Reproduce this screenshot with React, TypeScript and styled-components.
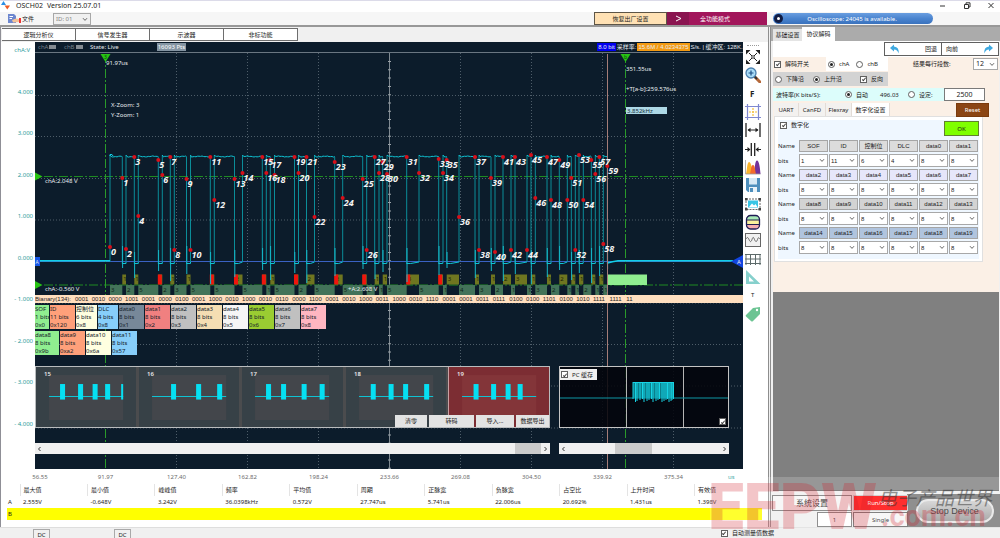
import React from "react";
import styled, { createGlobalStyle, css } from "styled-components";

const sans = `"Noto Sans", "Noto Sans CJK SC", sans-serif`;
const arial = `"Liberation Sans", "Noto Sans CJK SC", sans-serif`;

const GlobalStyle = createGlobalStyle`
  *, *::before, *::after { box-sizing: border-box; }
  body { margin: 0; background: #f0f0f0; color: #1c1c1c; font: 6px/8px ${sans}; }
  button, input, select { font: inherit; color: inherit; margin: 0; padding: 0; border-radius: 0; }
  svg { display: block; }
`;

/* ---------- Frame ---------- */
const Page = styled.div`
  position: relative;
  display: flex;
  flex-direction: column;
  min-height: 100vh;
  overflow: hidden;
`;
const TitleBar = styled.header`
  display: flex;
  align-items: center;
  height: 12px;
  padding: 0 5px 2px 1px;
  gap: 5px;
  background: #fff;
  border-top: 1px solid #dcdbe9;
`;
const Title = styled.h1`
  flex: 1;
  margin: 0;
  font-size: 7px;
  line-height: 8px;
  font-weight: 400;
`;
const Version = styled.span`
  margin-left: 4px;
`;
const WindowButtons = styled.div`
  display: flex;
  gap: 16px;
`;
const PlainButton = styled.button`
  display: grid;
  place-items: center;
  border: 0;
  background: none;
`;
const Toolbar = styled.div`
  display: grid;
  grid-template-columns: minmax(0, 1fr) 232px;
  height: 15px;
  background: #f6f6f6;
  border-bottom: 2px solid #989898;
`;
const ToolbarLeft = styled.div`
  display: flex;
  align-items: stretch;
`;
const FileButton = styled.button`
  display: flex;
  align-items: center;
  gap: 1px;
  width: 53px;
  padding-left: 8px;
  border: 0;
  background: none;
`;
const IdBox = styled.span`
  position: relative;
  width: 38px;
  height: 12px;
  margin-top: 1px;
  flex: none;
`;
const SelectField = styled.select<{ $pad?: number }>`
  appearance: none;
  display: block;
  width: 100%;
  height: 100%;
  padding-left: ${(p) => p.$pad ?? 2}px;
  border: 1px solid #a8a8a8;
  background: #fff;
`;
const IdSelect = styled(SelectField)`
  background: #f0f0f0;
  color: #858585;
`;
const Spacer = styled.div<{ $grow?: number }>`
  flex: ${(p) => p.$grow ?? 1};
`;
const ResetFactory = styled.button`
  width: 73px;
  border: 1px solid #5d5547;
  background: #ffe1b4;
`;
const ModeButton = styled.button`
  display: grid;
  grid-template-columns: 22px 1fr;
  align-items: center;
  width: 100px;
  padding-right: 26px;
  margin-right: 1px;
  border: 0;
  background: #a2165b;
  color: #fff;
`;
const ModeArrow = styled.span`
  display: grid;
  place-items: center;
  height: 13px;
  background: #8a1450;
`;
const StatusPill = styled.div`
  display: flex;
  align-items: center;
  width: 160px;
  height: 11px;
  margin: 1px 0 0 5px;
  padding-left: 1px;
  border-radius: 6px;
  background: linear-gradient(#6a9ee0, #4a84cf 50%, #3a72bd);
  color: #fff;
`;
const PillDot = styled.span`
  width: 9px;
  height: 9px;
  border: 3px solid #101c44;
  border-radius: 50%;
  background: #fff;
`;
const PillText = styled.span`
  flex: 1;
  text-align: center;
  padding-right: 12px;
`;
const Main = styled.main`
  flex: 1;
  display: grid;
  grid-template-columns: minmax(0, 1fr) 232px;
`;
const StatusBar = styled.footer`
  display: flex;
  align-items: flex-start;
  height: 11px;
  padding: 1px 226px 0 33px;
  background: #f0f0f0;
  border-top: 1px solid #dedede;
`;
const DcButton = styled.button`
  width: 17px;
  height: 12px;
  margin-right: 64px;
  border: 1px solid #a9a9a9;
  background: #f0f0f0;
`;

/* ---------- Form parts ---------- */
const Choice = styled.label`
  display: flex;
  align-items: center;
  gap: 4px;
  white-space: nowrap;
`;
const tick = css`
  appearance: none;
  flex: none;
  display: grid;
  place-items: center;
  width: 7px;
  height: 7px;
  border: 1px solid #606060;
  background: #fff;
`;
const Check = styled.input.attrs({ type: "checkbox" })`
  ${tick}
  &:checked::after {
    content: "";
    width: 2px;
    height: 4px;
    border: solid #444;
    border-width: 0 1px 1px 0;
    transform: rotate(40deg);
  }
`;
const Radio = styled.input.attrs({ type: "radio" })`
  ${tick}
  border-radius: 50%;
  &:checked::after {
    content: "";
    width: 3px;
    height: 3px;
    border-radius: 50%;
    background: #222;
  }
`;

/* ---------- Scope side ---------- */
const ScopeSide = styled.section`
  display: flex;
  flex-direction: column;
  min-width: 0;
  background: #fff;
  border-left: 1px solid #8f8f96;
`;
const ModeRow = styled.nav`
  display: flex;
  height: 15px;
  padding: 1px 0 0 1px;
  background: #f0f0f0;
`;
const ModeTab = styled.button`
  width: 74px;
  height: 13px;
  border: 1px solid #6e6e6e;
  border-left-width: 0;
  background: #fff;
`;
const ScopeRow = styled.div`
  display: grid;
  grid-template-columns: 34px minmax(0, 1fr) 25px;
`;
const YAxis = styled.div`
  display: flex;
  flex-direction: column;
  justify-content: space-between;
  align-items: flex-end;
  padding: 4px 2px 41px 0;
  color: #2b9c9c;
  white-space: nowrap;
`;
const AxisTitle = styled.span`
  padding-right: 3px;
`;
const Plot = styled.div`
  position: relative;
  display: flex;
  flex-direction: column;
  min-width: 0;
  overflow: hidden;
  background: #0c1c2b;
`;
const PlotHeader = styled.div`
  display: flex;
  align-items: center;
  height: 11px;
  flex: none;
  padding-left: 3px;
  border-bottom: 1px solid #6a7681;
  color: #e6eaee;
  white-space: nowrap;
`;
const Channel = styled.button`
  display: flex;
  align-items: center;
  gap: 1px;
  width: 26px;
  border: 0;
  background: none;
  color: #76818b;
  &::after {
    content: "";
    width: 7px;
    height: 4px;
    background: #848b92;
  }
`;
const Points = styled.span`
  margin-left: 38px;
  padding: 0 1px;
  background: #8494a2;
  color: #fff;
`;
const Tag = styled.span<{ $bg?: string; $w: number }>`
  width: ${(p) => p.$w}px;
  background: ${(p) => p.$bg ?? "none"};
  font-family: ${arial};
  text-align: center;
`;
const Canvas = styled.svg`
  position: absolute;
  left: 0;
  top: 11px;
  width: 100%;
  height: 416px;
`;
const Layers = styled.div`
  position: relative;
  padding: 242px 0 15px;
`;
const BinaryBand = styled.div`
  display: grid;
  grid-template-columns: 40px 568px;
  height: 8px;
  background: #ffdfbf;
  color: #27221e;
  font: 6px/8px ${arial};
  white-space: nowrap;
`;
const Nibbles = styled.div`
  display: grid;
  grid-template-columns: repeat(34, 1fr);
`;
const FieldRow = styled.div`
  display: flex;
  gap: 1px;
  margin-top: 2px;
`;
const Field = styled.div<{ $w: number; $bg: string }>`
  width: ${(p) => p.$w}px;
  height: 24px;
  background: ${(p) => p.$bg};
  color: #14202a;
  overflow: hidden;
  white-space: pre;
`;
const Lower = styled.div<{ $top: number }>`
  display: grid;
  grid-template-columns: minmax(0, 515px) 170px;
  gap: 9px;
  margin-top: ${(p) => p.$top}px;
`;
const Thumbs = styled.div`
  position: relative;
  display: grid;
  grid-template-columns: repeat(4, minmax(0, 104fr)) minmax(0, 101fr);
  height: 62px;
  border: 1px solid #b9bcbe;
  background: #4b4c4e;
`;
const Thumb = styled.div<{ $on: boolean }>`
  border-right: ${(p) => (p.$on ? 0 : 3)}px solid #4b4c4e;
  background: ${(p) => (p.$on ? "#7c2d33" : "#374147")};
  box-shadow: ${(p) => (p.$on ? "-1px 0 #c9a0a3" : "none")};
  overflow: hidden;
`;
const ThumbActions = styled.div`
  position: absolute;
  right: 0;
  bottom: 0;
  display: grid;
  grid-template-columns: 32px 45px 38px 33px;
  gap: 2px;
  height: 12px;
`;
const ActionButton = styled.button`
  border: 0;
  background: #e3e3e3;
  white-space: nowrap;
`;
const CachePanel = styled.div`
  position: relative;
  height: 62px;
  border: 1px solid #c4c4c4;
  background: #03050bdd;
`;
const CacheLabel = styled(Choice)`
  position: absolute;
  left: 0;
  top: 2px;
  height: 11px;
  padding: 0 4px 0 1px;
  background: #f0f0f0;
`;
const CacheToggle = styled(Check)`
  position: absolute;
  right: 2px;
  bottom: 2px;
`;
const ScrollTrack = styled.div`
  display: flex;
  align-items: center;
  height: 11px;
  background: #f0f0f0;
`;
const ScrollArrow = styled(PlainButton)`
  width: 9px;
  height: 11px;
`;
const ScrollThumb = styled.div<{ $w: number }>`
  width: ${(p) => p.$w}px;
  height: 11px;
  background: #cbcbcb;
`;
const IconBar = styled.div`
  display: flex;
  flex-direction: column;
  align-items: center;
  padding: 3px 5px 0 0;
`;
const BarGrip = styled.i`
  width: 12px;
  height: 2px;
  margin-bottom: 1px;
  border-top: 1px dotted #999;
`;
const BarButton = styled(PlainButton)`
  width: 18px;
  height: 18px;
  &:nth-of-type(3n) { height: 19px; }
`;
const XAxis = styled.div`
  display: grid;
  grid-template-columns: 60px repeat(9, 71px) minmax(0, 1fr);
  height: 15px;
  padding: 4px 0 0 9px;
  color: #6c6c6c;
  text-align: center;
`;
const Unit = styled.span`
  padding-left: 19px;
  color: #2b9c9c;
  text-align: left;
`;
const Stats = styled.table`
  width: calc(100% - 12px);
  margin: 0 6px 7px;
  border-collapse: collapse;
  table-layout: fixed;
  text-align: left;
  th, td { height: 12px; padding: 0 0 0 3px; font-weight: 400; white-space: nowrap; }
  th:first-child { width: 13px; padding-left: 1px; }
  thead th + th { border-left: 1px solid #e4e4e4; }
`;
const YellowRow = styled.tr`
  background: #ff0;
`;

/* ---------- Decode side ---------- */
const DecodeSide = styled.aside`
  display: flex;
  flex-direction: column;
  border-left: 3px double #8e8e8e;
  background: #f0f0f0;
`;
const SideTabs = styled.div`
  display: flex;
  align-items: flex-end;
  height: 14px;
  padding-left: 2px;
  background: #ababab;
`;
const SideTab = styled.button<{ $on?: boolean }>`
  width: ${(p) => (p.$on ? 33 : 29)}px;
  height: ${(p) => (p.$on ? 14 : 12)}px;
  border: 0;
  background: ${(p) => (p.$on ? "#fff" : "#e4e4e4")};
  white-space: nowrap;
`;
const Settings = styled.div`
  height: 251px;
  margin: 0 1px 0 2px;
  background: #fbf0e6;
`;
const NavRow = styled.div`
  display: flex;
  justify-content: flex-end;
  height: 16px;
  padding: 1px 0;
  background: #fff;
`;
const NavButton = styled.button<{ $end?: boolean }>`
  display: flex;
  flex-direction: ${(p) => (p.$end ? "row" : "row-reverse")};
  justify-content: space-between;
  align-items: center;
  width: 58px;
  padding: 0 4px;
  border: 1px solid #606060;
  margin-left: -1px;
  background: #fff;
`;
const SwitchRow = styled.div`
  display: grid;
  grid-template-columns: 52px 62px 1fr 25px;
  align-items: center;
  height: 14px;
  padding: 0 1px;
`;
const Group = styled.div<{ $bg: string; $gap: number }>`
  display: flex;
  align-items: center;
  gap: ${(p) => p.$gap}px;
  height: 14px;
  padding-left: 2px;
  background: ${(p) => p.$bg};
`;
const EdgeGroup = styled(Group)`
  width: 115px;
  margin-top: 1px;
  padding-right: 5px;
`;
const CountLabel = styled.label`
  padding-left: 25px;
`;
const CountBox = styled.span`
  position: relative;
  height: 12px;
  font-size: 7px;
`;
const BaudRow = styled.div`
  display: grid;
  grid-template-columns: 69px 35px 28px 36px 41px;
  align-items: center;
  height: 13px;
  margin-top: 2px;
  padding-left: 3px;
  background: linear-gradient(90deg, #dcfdfb 211px, transparent 211px);
`;
const BaudInput = styled.input`
  height: 13px;
  width: 41px;
  border: 1px solid #7a7a7a;
  background: #fff;
  font-size: 7px;
  text-align: center;
`;
const ProtoTabs = styled.div`
  display: flex;
  align-items: stretch;
  height: 13px;
  margin-top: 2px;
  padding-left: 1px;
`;
const ProtoTab = styled.button<{ $w: number; $on?: boolean }>`
  width: ${(p) => p.$w}px;
  border: 0;
  border-right: 1px solid #e3dcd6;
  background: ${(p) => (p.$on ? "#fff" : "#f3f1ef")};
  white-space: nowrap;
`;
const ResetButton = styled.button`
  width: 33px;
  height: 14px;
  margin-left: 66px;
  border: 1px solid #7a3a0c;
  background: #8b4513;
  color: #fff;
`;
const ProtoPanel = styled.div`
  width: 209px;
  height: 146px;
  margin-left: 1px;
  padding: 3px 3px 2px;
  border: 1px solid #e0e0e0;
  background: #fff;
`;
const Blue = styled.div`
  height: 139px;
  background: #eff7ff;
`;
const DigitalHead = styled.div`
  display: flex;
  justify-content: space-between;
  align-items: flex-start;
  height: 19px;
  padding: 1px 0 0 2px;
`;
const OkButton = styled.button`
  width: 35px;
  height: 15px;
  border: 1px solid #61802f;
  background: #7fff00;
`;
const BitsRow = styled.div`
  display: grid;
  grid-template-columns: 20px repeat(6, 29px);
  column-gap: 1px;
  height: 14px;
  align-items: center;
  &:nth-child(odd) { height: 15px; }
`;
const NameButton = styled.button<{ $bg: string }>`
  height: 12px;
  border: 1px solid #a5a5a5;
  background: ${(p) => p.$bg};
  font-family: ${arial};
`;
const BitsBox = styled.span`
  position: relative;
  height: 13px;
  font-family: ${arial};
`;
const Results = styled.div`
  flex: 1;
  min-height: 100px;
  margin: 0 1px 3px 2px;
  border-bottom: 1px solid #666;
  background: #808080;
`;
const RunArea = styled.div`
  display: grid;
  grid-template-columns: 80px 55px 1fr;
  grid-template-rows: 16px 15px;
  gap: 1px;
  height: 33px;
  padding: 1px 0 0 1px;
  background: linear-gradient(90deg, #f0f0f0 136px, #777 136px);
`;
const SystemButton = styled.button`
  border: 1px solid #777;
  background: #f6f6f6;
  font-size: 8px;
  line-height: 10px;
`;
const RunButton = styled.button`
  border: 1px solid #c8c8c8;
  background: #f00;
  color: #fff;
`;
const StopCell = styled.div`
  grid-row: span 2;
  display: grid;
  place-items: center;
`;
const StopButton = styled.button`
  width: 78px;
  height: 24px;
  border: 2px solid #e6e6e6;
  border-radius: 12px;
  background: linear-gradient(#cfcfcf, #989898);
  color: #222;
  font: 9px/12px ${arial};
`;
const CountInput = styled.input`
  justify-self: end;
  width: 35px;
  border: 1px solid #777;
  background: #fff;
  text-align: center;
`;
const SingleButton = styled.button`
  border: 1px solid #666;
  background: #f6f6f6;
`;
const Watermark = styled.svg`
  position: absolute;
  right: 0;
  bottom: 0;
  pointer-events: none;
`;
const ChevronSvg = styled.svg`
  position: absolute;
  right: 3px;
  top: 4px;
  pointer-events: none;
`;

const Chevron = () => (
  <ChevronSvg width="6" height="5" viewBox="0 0 6 5" fill="none" stroke="#666">
    <path d="M1 1.2 3 3.4 5 1.2" />
  </ChevronSvg>
);

/* ---------- Signal data: x and y of each crossing, in canvas units ---------- */
const marks: [number, number][] = [
  [110, 247], [122.3, 178], [126, 249], [134.3, 157], [138.3, 216], [158.3, 160], [162.3, 175], [170.3, 157],
  [174.3, 250], [186.5, 179], [190.5, 250], [210.3, 157], [214.3, 200], [234.5, 179], [242.5, 173], [262.3, 157],
  [266.3, 173], [270.3, 160], [274.5, 175], [294.5, 157], [298.5, 173], [306.5, 157], [314.5, 217], [334.7, 162],
  [342.7, 198], [362.7, 179], [366.7, 250], [374.7, 157], [379, 173], [382.7, 162], [387, 174], [406.7, 157],
  [419, 173], [438.7, 159], [443, 173], [446.7, 160], [459, 217], [475, 157], [479, 250], [491, 178],
  [495, 252], [503, 157], [511, 250], [515, 157], [527, 250], [531, 155], [535.3, 198], [547, 157],
  [551, 200], [559.3, 160], [567.3, 200], [571.3, 178], [575.3, 250], [579, 155], [583.3, 200], [591.3, 160],
  [595.3, 174], [599.3, 157], [603.3, 244], [607.3, 166],
];
const redLows = [5, 11, 13, 15, 19, 23, 25, 31, 33];
const noise = (x: number) => Math.sin(x * 2.7) * 0.25 + Math.sin(x * 0.4) * 0.35;

function levelPath(from: number, to: number, y: number) {
  let d = `M${from} ${y - 1.5}`;
  for (let x = from + 1; x < to; x += 1.5) d += `L${x.toFixed(1)} ${(y + noise(x)).toFixed(1)}`;
  return d + `L${to} ${y}`;
}

const Waveform = () => {
  const highs: string[] = [];
  const edges: string[] = [];
  const spikes: string[] = [];
  const lows: React.ReactNode[] = [];
  const tops: React.ReactNode[] = [];
  for (let i = 0; i < marks.length; i += 2) {
    const up = marks[i][0];
    const down = marks[i + 1][0];
    const next = marks[i + 2]?.[0];
    const bits = Math.max(1, Math.round((down - up) / 4));
    highs.push(levelPath(up, down, 156.5));
    edges.push(`M${up} 262V155M${down} 157V264`);
    spikes.push(`M${down + 0.3} ${246 + ((i * 7) % 8)}V${268 + ((i * 5) % 17)}`);
    tops.push(
      <g key={i}>
        <rect x={up} y="285" width={down - up} height="10" fill="#437359" />
        <text x={up + 1} y="292" fontSize="6" fill="#0f2419">{bits}</text>
      </g>
    );
    if (next) {
      const red = redLows.includes(i + 1);
      highs.push(`M${down} 263.5H${Math.min(down + 4, next)}L${next} 262`);
      lows.push(
        <g key={i}>
          <rect x={down} y="274.5" width={next - down} height="10" fill="#6f7620" />
          {!(red && next - down < 6) && (
            <text x={down + 1} y="281" fontSize="6" fill="#1c2006">{Math.max(1, Math.round((next - down) / 4))}</text>
          )}
          {red && <rect x={down - 0.5} y="274.5" width="4" height="10" fill="#f0150d" />}
        </g>
      );
    }
  }
  return (
    <g>
      {tops}
      {lows}
      <rect x="607.5" y="274.5" width="39.5" height="10.5" fill="#90ee90" />
      <path d={edges.join("")} stroke="#0b8d99" fill="none" />
      <path d={spikes.join("")} stroke="#16b9c9" fill="none" />
      <path d={highs.join("")} stroke="#0fc3d3" fill="none" />
      <path d="M35 260.7H110M607.5 263l5-1.3L618 260.7H733" stroke="#12cfe6" fill="none" strokeWidth="1.4" />
      <path d="M110 156V154.5h2l1 1.5" stroke="#12cfe6" fill="none" />
    </g>
  );
};

const gridX = [176.5, 247.5, 318.5, 460.5, 531.5, 602.5, 673.5];
const gridY = [95.5, 136.5, 178.5, 220, 303, 344.5, 386, 428];

const ScopeCanvas = () => (
  <Canvas viewBox="35 53 708 416" preserveAspectRatio="xMinYMin slice" fontFamily={sans} fontSize="6" fill="#e8ecef">
    <path d={gridX.map((x) => `M${x} 53V469`).join("") + gridY.map((y) => `M35 ${y}H743`).join("")} stroke="#4e5d69" strokeDasharray="1 2" />
    <path d="M389.5 53V469" stroke="#7f8991" />
    <path d="M389.5 61V469" stroke="#9aa2a8" strokeWidth="3" strokeDasharray="1 7.3" />
    <path d="M35 261.5H743" stroke="#3a62c4" />
    <path d="M44 176.5H743M44 285H743" stroke="#1e8a22" strokeDasharray="9 2 2 2" />
    <path d="M105.5 54V469M625.5 54V469" stroke="#2a9a2a" strokeDasharray="9 2 2 2" />
    <Waveform />
    <path d="M607.5 54V469" stroke="#a57d78" />
    <path d="M35 172.5 42.5 176.5 35 180.5ZM35 281 42.5 285 35 289ZM100.5 54H110.5L105.5 62ZM620.5 54H630.5L625.5 62Z" fill="#28c314" />
    <text x="104" y="59" fontSize="5" fill="#0b3d08">3</text>
    <text x="624" y="59" fontSize="5" fill="#0b3d08">b</text>
    <rect x="35" y="257" width="5" height="9" fill="#1557e8" />
    <text x="35.5" y="264" fontSize="5">A</text>
    <path d="M731 261.5 743 255V268Z" fill="#1245e0" />
    <text x="737" y="264" fontSize="6">A</text>
    <g fill="#d8101a">
      {marks.map(([x, y], i) => <circle key={i} cx={x} cy={y} r="2" />)}
    </g>
    <g fontSize="9" fontWeight="700" fontStyle="italic" fill="#f4f4f4">
      {marks.map(([x, y], i) => <text key={i} x={x + 1} y={y + 8}>{i}</text>)}
    </g>
    <text x="106" y="65">91.97us</text>
    <text x="111" y="107">X-Zoom: 3</text>
    <text x="111" y="117">Y-Zoom: 1</text>
    <text x="45" y="183">chA:2.048 V</text>
    <text x="45" y="291">chA:-0.560 V</text>
    <text x="348" y="291">+A:2.608 V</text>
    <text x="626" y="71">351.55us</text>
    <text x="626" y="91">+T[a-b]:259.576us</text>
    <rect x="626" y="107" width="41" height="7" fill="#add8e6" />
    <text x="627" y="113" fill="#16303a">3.852kHz</text>
  </Canvas>
);

const nibbles = "0001 0010 0000 1001 0001 0000 0100 0001 1000 0010 1000 0010 0110 0000 1100 0001 0010 1000 0011 1000 0010 1110 0001 0001 0011 0111 0100 0100 1101 0100 1010 1111 1111 11".split(" ");

type FieldSpec = [string, string, string, number, string];
const fieldRows: FieldSpec[][] = [
  [
    ["SOF", "1 bits", "0x0", 14, "#90ee90"],
    ["ID", "11 bits", "0x120", 25, "#ffa07a"],
    ["控制位", "6 bits", "0x8", 21, "#ffffe0"],
    ["DLC", "4 bits", "0x8", 20, "#87cefa"],
    ["data0", "8 bits", "0x1", 25, "#778899"],
    ["data1", "8 bits", "0x2", 25, "#f08080"],
    ["data2", "8 bits", "0x3", 25, "#c0c0c0"],
    ["data3", "8 bits", "0x4", 25, "#f5deb3"],
    ["data4", "8 bits", "0x5", 25, "#f5f5f5"],
    ["data5", "8 bits", "0x6", 25, "#9acd32"],
    ["data6", "8 bits", "0x7", 25, "#c0c0c0"],
    ["data7", "8 bits", "0x8", 25, "#ffb6c1"],
  ],
  [
    ["data8", "8 bits", "0x9b", 24, "#90ee90"],
    ["data9", "8 bits", "0xa2", 25, "#ffa07a"],
    ["data10", "8 bits", "0x6a", 25, "#ffffe0"],
    ["data11", "8 bits", "0x57", 25, "#87cefa"],
  ],
];

const thumbs: [number, number[]][] = [
  [15, [11, 29, 43.5, 56, 72]],
  [16, [19, 44, 65]],
  [17, [11, 26, 46.5, 64.5]],
  [18, [11.7, 29.5, 44, 65]],
  [19, [11.5, 29, 43.5, 55.5]],
];
const burst = [0, 2.5, 4, 7, 9.5, 11, 14, 16, 18.5, 20, 23, 25, 26.5, 29, 31, 33, 34.5, 36, 38, 39, 40.5];
const ticks = ["56.55", "91.97", "127.40", "162.82", "198.24", "233.66", "269.08", "304.50", "339.92", "375.34"];

const stats = [
  ["最大值", "2.555V"], ["最小值", "-0.648V"], ["峰峰值", "3.242V"], ["频率", "36.0398kHz"], ["平均值", "0.572V"],
  ["周期", "27.747us"], ["正脉宽", "5.741us"], ["负脉宽", "22.006us"], ["占空比", "20.692%"], ["上升时间", "1.431us"],
  ["有效值", "1.398V"],
];

/* ---------- Vertical tool strip drawings ---------- */
const k = "#222";
const tools: [string, React.ReactNode][] = [
  ["全屏", <g><path d="M4 4 12 12M12 4 4 12" stroke={k} /><path d="M1 1H5.500L1 5.500ZM15 1V5.500L10.500 1ZM1 15V10.500L5.500 15ZM15 15H10.500L15 10.500Z" fill={k} /><circle cx="8" cy="8" r="1.300" fill="#fff" stroke={k} strokeWidth=".8" /></g>],
  ["放大", <g><path d="M10 10 15 15" stroke="#b5683a" strokeWidth="3" strokeLinecap="round" /><path d="M9.500 9.500 12 12" stroke="#333" strokeWidth="2" /><circle cx="6" cy="6" r="5" fill="#a9dcf8" stroke="#4b7fae" strokeWidth="1.300" /><path d="M6 3.500V8.500M3.500 6H8.500" stroke="#1d4f86" strokeWidth="1.200" /></g>],
  ["F", <text x="5" y="11" fontSize="8" fontWeight="700" fill={k}>F</text>],
  ["框选", <g fill="none"><path d="M2.500 0V16M13.500 0V16M0 2.500H16M0 13.500H16" stroke="#7f88d0" strokeWidth="1.200" /><path d="M8 4V12M4 8H12" stroke="#f3bd3a" strokeWidth="1.200" strokeDasharray="2 1" /></g>],
  ["展宽", <g stroke={k} fill={k}><path d="M1 1V15M15 1V15" strokeWidth="1.300" /><path d="M3 8H13" /><path d="M2.500 8 5.500 5.800V10.200ZM13.500 8 10.500 5.800V10.200Z" stroke="none" /></g>],
  ["收窄", <g stroke={k} fill={k}><path d="M6.300 2V15M9.700 2V15" strokeWidth="1.300" /><path d="M0 8.500H3M13 8.500H16" /><path d="M5.500 8.500 2.500 6V11ZM10.500 8.500 13.500 6V11Z" stroke="none" /></g>],
  ["频谱", <g><path d="M9 15C10 8 10 1.500 12 1.500S15 8 15.500 15Z" fill="#73319b" /><path d="M1 15C2 12 2 3 4 3S7 9 8 15Z" fill="#fbb52c" /><path d="M5 15C6 11 6 6 8 6S10 11 11 15Z" fill="#f36a2c" /><path d="M.5 1V15H15.500" stroke="#999" fill="none" strokeWidth=".8" /></g>],
  ["保存", <g><path d="M1 1H15V15H3L1 13Z" fill="#4e8fbd" /><path d="M4 1H12V7.500H4Z" fill="#d6e9f5" /><path d="M4 10H12V15H4Z" fill="#e9f3f9" /><path d="M5 11H8V15H5Z" fill="#4e8fbd" /></g>],
  ["截图", <g><rect x="1" y="3" width="14" height="10.500" fill="none" stroke="#666" strokeDasharray="2 1" /><path d="M0 2H2.500V4.500H0ZM13.500 2H16V4.500H13.500ZM0 12H2.500V14.500H0ZM13.500 12H16V14.500H13.500Z" fill="#444" /><rect x="3" y="4.500" width="10" height="7" fill="#38c5e5" /><path d="M4 11 7 7.500 9 9.500 10.500 8 12.500 11Z" fill="#fff" /></g>],
  ["配色", <g><rect x="1.500" y="1.500" width="13" height="13.500" rx="4" fill="#f9f19c" /><path d="M1.500 6V5A4 4 0 0 1 5 1.500H11A4 4 0 0 1 14.500 5V6Z" fill="#a8e9b8" /><path d="M1.500 10.500V11.500A4 4 0 0 0 5 15H11A4 4 0 0 0 14.500 11.500V10.500Z" fill="#f3adb0" /><path d="M1.500 6H14.500M1.500 10.500H14.500" stroke="#201d55" /><rect x="1.500" y="1.500" width="13" height="13.500" rx="4" fill="none" stroke="#201d55" strokeWidth="1.300" /></g>],
  ["波形", <g fill="none" stroke="#666"><rect x=".5" y="1.500" width="15" height="13" fill="#f1f1f1" /><path d="M1 7C2 5 3 5 4 7.500S6 10.500 7 7.500 8.500 5 9.500 7.500 11.500 10.500 12.500 7.500 14 6 15 7" /></g>],
  ["表格", <path d="M0 3.500H16M0 8H16M0 12.500H16M1 3V14M5.500 3V14M10.500 3V14M15 3V14" stroke="#5d6a6a" />],
  ["测量", <path d="M1 1V15H15.500ZM4 7.500 9 12.500H4Z" fill="#86d0cc" fillRule="evenodd" />],
  ["T", <text x="6" y="10" fontSize="6" fill={k}>T</text>],
  ["标签", <g><path d="M1 9 8 2 15 1V8L8 15Q7 16 6 15L1 10.500Q.3 9.700 1 9Z" fill="#6cc493" /><circle cx="12" cy="4" r="1.200" fill="#fff" /></g>],
];

const eights = [8, 8, 8, 8, 8, 8];
const bitGroups: { names: string[]; bits: number[]; bg: string }[] = [
  { names: ["SOF", "ID", "控制位", "DLC", "data0", "data1"], bits: [1, 11, 6, 4, 8, 8], bg: "#dcdcdc" },
  { names: ["data2", "data3", "data4", "data5", "data6", "data7"], bits: eights, bg: "#e6e6fa" },
  { names: ["data8", "data9", "data10", "data11", "data12", "data13"], bits: eights, bg: "#d3d3d3" },
  { names: ["data14", "data15", "data16", "data17", "data18", "data19"], bits: eights, bg: "#b0c4de" },
];

const Scrollbar = ({ before, after, thumb }: { before: number; after: number; thumb: number }) => (
  <ScrollTrack>
    <ScrollArrow aria-label="向左">
      <svg width="5" height="6" viewBox="0 0 5 6" fill="none" stroke="#333"><path d="M3.500 1 1.500 3 3.500 5" /></svg>
    </ScrollArrow>
    <Spacer $grow={before} />
    <ScrollThumb $w={thumb} />
    <Spacer $grow={after} />
    <ScrollArrow aria-label="向右">
      <svg width="5" height="6" viewBox="0 0 5 6" fill="none" stroke="#333"><path d="M1.500 1 3.500 3 1.500 5" /></svg>
    </ScrollArrow>
  </ScrollTrack>
);

const ScopePanel = () => (
  <ScopeSide>
    <ModeRow>
      {["逻辑分析仪", "信号发生器", "示波器", "非标功能"].map((t) => <ModeTab key={t}>{t}</ModeTab>)}
    </ModeRow>
    <ScopeRow>
      <YAxis>
        <AxisTitle>chA:V</AxisTitle>
        {["4.000", "3.000", "2.000", "1.000", "0.000", "- 1.000", "- 2.000", "- 3.000", "- 4.000"].map((t) => <span key={t}>{t}</span>)}
      </YAxis>
      <Plot>
        <PlotHeader>
          <Channel>chA</Channel>
          <Channel>chB</Channel>
          <span>State: Live</span>
          <Points>16093 Pts</Points>
          <Spacer />
          <Tag $w={19} $bg="#0000f0">8.0 bit</Tag>
          <Tag $w={21}>采样率:</Tag>
          <Tag $w={53} $bg="#f39a12">15.6M / 4.0234375</Tag>
          <Tag $w={53}>S/s. | 缓冲区: 128K.</Tag>
        </PlotHeader>
        <ScopeCanvas />
        <Layers>
          <BinaryBand>
            <span>Bianary(134):</span>
            <Nibbles>{nibbles.map((n, i) => <span key={i}>{n}</span>)}</Nibbles>
          </BinaryBand>
          {fieldRows.map((row, r) => (
            <FieldRow key={r}>
              {row.map(([name, bits, value, w, bg]) => (
                <Field key={name} $w={w} $bg={bg}>{`${name}\n${bits}\n${value}`}</Field>
              ))}
            </FieldRow>
          ))}
          <Lower $top={11}>
            <Thumbs>
              {thumbs.map(([id, pulses]) => (
                <Thumb key={id} $on={id === 19}>
                  <svg width="100%" height="60" viewBox="0 0 100 60" preserveAspectRatio="xMinYMin slice" fontFamily={sans}>
                    <rect x="13" y="8" width="74" height="45" fill={id === 19 ? "#833539" : "#43464b"} />
                    <text x="8" y="9" fontSize="6" fontWeight="600" fill="#e8e8e8">{id}</text>
                    <path d="M13 29.500H87" stroke="#0fc3d3" />
                    {pulses.map((p) => <rect key={p} x={13 + p} y="17" width={p > 70 ? 2 : 5} height="15.500" fill="#06dff2" />)}
                  </svg>
                </Thumb>
              ))}
              <ThumbActions>
                {["清零", "转码", "导入...", "数据导出"].map((t) => <ActionButton key={t}>{t}</ActionButton>)}
              </ThumbActions>
            </Thumbs>
            <CachePanel>
              <svg width="100%" height="60" viewBox="0 0 168 60" preserveAspectRatio="xMinYMin slice">
                <path d="M66.500 0V60M123.500 0V60" stroke="#b5b5b5" />
                <path d="M0 31H168" stroke="#0e98a6" />
                <rect x="73" y="15" width="41" height="16" fill="#0a7f8b" />
                <path d={burst.map((b, i) => `M${73 + b} 15V${32 + ((i * 3) % 4)}`).join("") + "M73 15.500H114"} stroke="#17d3e4" />
              </svg>
              <CacheLabel><Check defaultChecked />PC 缓存</CacheLabel>
              <CacheToggle defaultChecked aria-label="显示缓存" />
            </CachePanel>
          </Lower>
          <Lower $top={15}>
            <Scrollbar before={1} after={0} thumb={26} />
            <Scrollbar before={47} after={67} thumb={37} />
          </Lower>
        </Layers>
      </Plot>
      <IconBar>
        <BarGrip />
        {tools.map(([name, art]) => (
          <BarButton key={name} aria-label={name}>
            <svg width="16" height="16" viewBox="0 0 16 16" fontFamily={sans}>{art}</svg>
          </BarButton>
        ))}
      </IconBar>
    </ScopeRow>
    <XAxis>
      {ticks.map((t) => <span key={t}>{t}</span>)}
      <Unit>us</Unit>
    </XAxis>
    <Stats>
      <thead>
        <tr><th />{stats.map(([n]) => <th key={n}>{n}</th>)}</tr>
      </thead>
      <tbody>
        <tr><th>A</th>{stats.map(([n, v]) => <td key={n}>{v}</td>)}</tr>
        <YellowRow><th>B</th>{stats.map(([n]) => <td key={n} />)}</YellowRow>
      </tbody>
    </Stats>
  </ScopeSide>
);

const DecodePanel = () => (
  <DecodeSide>
    <SideTabs>
      <SideTab>基础设置</SideTab>
      <SideTab $on>协议解码</SideTab>
    </SideTabs>
    <Settings>
      <NavRow>
        <NavButton>
          回退
          <svg width="11" height="10" viewBox="0 0 11 10"><path d="M1 4 5 .5V2.500Q10.500 3 9.500 9.500 8.500 5.500 5 5.500V7.500Z" fill="#3fa9e0" /></svg>
        </NavButton>
        <NavButton $end>
          向前
          <svg width="11" height="10" viewBox="0 0 11 10"><path d="M10 4 6 .5V2.500Q.5 3 1.500 9.500 2.500 5.500 6 5.500V7.500Z" fill="#3fa9e0" /></svg>
        </NavButton>
      </NavRow>
      <SwitchRow>
        <Choice><Check defaultChecked />解码开关</Choice>
        <Group $bg="#fff" $gap={7}>
          <Choice><Radio name="ch" defaultChecked />chA</Choice>
          <Choice><Radio name="ch" />chB</Choice>
        </Group>
        <CountLabel htmlFor="count">结果每行段数:</CountLabel>
        <CountBox><SelectField id="count"><option>12</option></SelectField><Chevron /></CountBox>
      </SwitchRow>
      <EdgeGroup $bg="#d3d3d3" $gap={9}>
        <Choice><Radio name="edge" />下降沿</Choice>
        <Choice><Radio name="edge" defaultChecked />上升沿</Choice>
        <Spacer />
        <Choice><Check defaultChecked />反向</Choice>
      </EdgeGroup>
      <BaudRow>
        <span>波特率(K bits/S):</span>
        <Choice><Radio name="baud" defaultChecked />自动</Choice>
        <span>496.03</span>
        <Choice><Radio name="baud" />设定:</Choice>
        <BaudInput defaultValue="2500" aria-label="波特率" />
      </BaudRow>
      <ProtoTabs>
        <ProtoTab $w={25}>UART</ProtoTab>
        <ProtoTab $w={27}>CanFD</ProtoTab>
        <ProtoTab $w={26}>Flexray</ProtoTab>
        <ProtoTab $w={38} $on>数字化设置</ProtoTab>
        <ResetButton>Reset</ResetButton>
      </ProtoTabs>
      <ProtoPanel>
        <Blue>
          <DigitalHead>
            <Choice><Check defaultChecked />数字化</Choice>
            <OkButton>OK</OkButton>
          </DigitalHead>
          {bitGroups.map((g) => (
            <React.Fragment key={g.bg}>
              <BitsRow>
                <span>Name</span>
                {g.names.map((n) => <NameButton key={n} $bg={g.bg}>{n}</NameButton>)}
              </BitsRow>
              <BitsRow>
                <span>bits</span>
                {g.names.map((n, i) => (
                  <BitsBox key={n}>
                    <SelectField $pad={1} aria-label={n}><option>{g.bits[i]}</option></SelectField>
                    <Chevron />
                  </BitsBox>
                ))}
              </BitsRow>
            </React.Fragment>
          ))}
        </Blue>
      </ProtoPanel>
    </Settings>
    <Results />
    <RunArea>
      <SystemButton>系统设置</SystemButton>
      <RunButton>Run/Stop</RunButton>
      <StopCell><StopButton>Stop Device</StopButton></StopCell>
      <CountInput defaultValue="1" aria-label="次数" />
      <SingleButton>Single</SingleButton>
    </RunArea>
  </DecodeSide>
);

export default function App() {
  return (
    <Page>
      <GlobalStyle />
      <TitleBar>
        <svg width="10" height="9" viewBox="0 0 10 9"><path d="M0 4 2.500 0 5 4Z" fill="#2b8fe6" /><path d="M3.500 4.500H9L6.300 8.500Z" fill="#ee5a24" /></svg>
        <Title>OSCH02<Version>Version 25.07.01</Version></Title>
        <WindowButtons>
          <PlainButton aria-label="最小化"><svg width="8" height="7" viewBox="0 0 8 7"><path d="M1 4H6" stroke="#333" /></svg></PlainButton>
          <PlainButton aria-label="还原"><svg width="8" height="7" viewBox="0 0 8 7" fill="none" stroke="#333"><path d="M1.500 2.500h4v4h-4zM3 2.500V.8H7V5H5.500" /></svg></PlainButton>
          <PlainButton aria-label="关闭"><svg width="8" height="7" viewBox="0 0 8 7"><path d="M1.500 1 6.500 6M6.500 1 1.500 6" stroke="#333" /></svg></PlainButton>
        </WindowButtons>
      </TitleBar>
      <Toolbar>
        <ToolbarLeft>
          <FileButton>
            <svg width="13" height="10" viewBox="0 0 13 10"><path d="M0 0H6L8 2V9H0Z" fill="#6d87cf" /><path d="M1.500 2.500H5M1.500 4.500H4" stroke="#fff" /><path d="M4 6 8 4.500 11 5V8L5 8.500Z" fill="#f3c39a" /><path d="M11 4H13V9H11Z" fill="#e33" /></svg>
            文件
          </FileButton>
          <IdBox><IdSelect aria-label="ID"><option>ID: 01</option></IdSelect><Chevron /></IdBox>
          <Spacer />
          <ResetFactory>恢复出厂设置</ResetFactory>
          <ModeButton>
            <ModeArrow><svg width="7" height="7" viewBox="0 0 7 7"><path d="M1 1 6 3.500 1 6" stroke="#fff" fill="none" /></svg></ModeArrow>
            全功能模式
          </ModeButton>
        </ToolbarLeft>
        <StatusPill><PillDot /><PillText>Oscilloscope: 24045 is available.</PillText></StatusPill>
      </Toolbar>
      <Main>
        <ScopePanel />
        <DecodePanel />
      </Main>
      <StatusBar>
        <DcButton>DC</DcButton>
        <DcButton>DC</DcButton>
        <Spacer />
        <Choice><Check defaultChecked />自动测量值数据</Choice>
      </StatusBar>
      <Watermark width="290" height="61" viewBox="710 477 290 61" fontFamily={`Roboto, "Noto Sans CJK SC", sans-serif`}>
        <rect x="710" y="477" width="290" height="51" fill="#fff" opacity=".18" />
        <text x="708" y="529" fontSize="64" fontWeight="900" fill="#d01c28" opacity=".25">EEPW</text>
        <text x="878" y="505" fontSize="19" fontStyle="italic" fill="#333" opacity=".5">电子产品世界</text>
        <text x="881" y="526" fontSize="29" fontWeight="700" fill="#d01c28" opacity=".28">.com.cn</text>
      </Watermark>
    </Page>
  );
}
